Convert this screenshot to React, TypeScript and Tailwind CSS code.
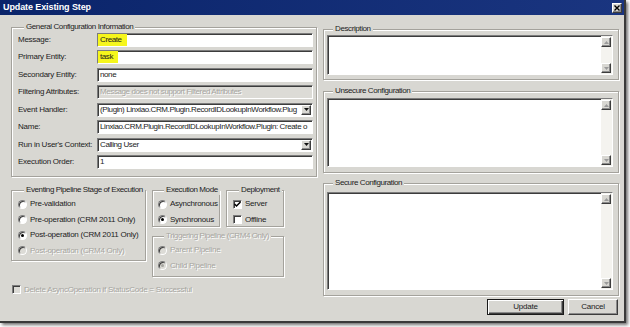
import type { ReactNode } from 'react';

const face = "bg-[#d8d7d2]";
const sunken = "border border-t-[#7c7c7c] border-l-[#7c7c7c] border-b-white border-r-white shadow-[inset_1px_1px_0_#3c3c3c]";
const raised = "border border-t-white border-l-white border-b-[#3c3c3c] border-r-[#3c3c3c] shadow-[inset_-1px_-1px_0_#8a8a8a]";
const greyText = "text-[#a6a5a0] [text-shadow:1px_1px_0_#fff]";

function Arrow({ dir, disabled = false }: { dir: 'up' | 'down'; disabled?: boolean }) {
  return (
    <svg width="5" height="3" viewBox="0 0 5 3">
      <path d={dir === 'up' ? 'M0 3 L2.5 0 L5 3 Z' : 'M0 0 L2.5 3 L5 0 Z'} fill={disabled ? '#9a9a9a' : '#111'} />
    </svg>
  );
}

function ArrowButton({ dir, muted = false }: { dir: 'up' | 'down'; muted?: boolean }) {
  return (
    <div className={`w-[10px] h-[10px] flex items-center justify-center ${face} ${raised}`}>
      <Arrow dir={dir} disabled={muted} />
    </div>
  );
}

function TextBox({ value, highlight = false, disabled = false }: { value: string; highlight?: boolean; disabled?: boolean }) {
  return (
    <div className={`h-[14px] min-w-0 flex items-stretch overflow-hidden whitespace-nowrap tracking-[-0.4px] ${sunken} ${disabled ? `bg-[#dcdbd6] ${greyText}` : 'bg-white text-[#1c1c1c]'}`}>
      {highlight ? (
        <span className="flex items-center bg-[#f6f61c] pl-[2px] pr-[5px]">{value}</span>
      ) : (
        <span className="flex items-center pl-[2px]">{value}</span>
      )}
    </div>
  );
}

function Combo({ value }: { value: string }) {
  return (
    <div className={`h-[14px] min-w-0 flex items-stretch bg-white text-[#1c1c1c] tracking-[-0.4px] ${sunken}`}>
      <span className="flex-1 min-w-0 flex items-center overflow-hidden whitespace-nowrap pl-[2px]">{value}</span>
      <div className="pr-[1px] flex items-center">
        <ArrowButton dir="down" />
      </div>
    </div>
  );
}

function Group({ title, className, disabled = false, children }: { title: string; className: string; disabled?: boolean; children?: ReactNode }) {
  return (
    <fieldset className={`min-w-0 border border-[#a4a29c] shadow-[inset_1px_1px_0_#fff,1px_1px_0_#fff] ${className}`}>
      <legend className={`ml-[6px] px-[2px] h-[10px] leading-[10px] whitespace-nowrap tracking-[-0.4px] ${face} ${disabled ? greyText : 'text-[#1c1c1c]'}`}>{title}</legend>
      {children}
    </fieldset>
  );
}

function Radio({ label, checked = false, disabled = false }: { label: string; checked?: boolean; disabled?: boolean }) {
  return (
    <div className="h-[15.5px] flex items-center gap-[3px] whitespace-nowrap">
      <span className={`shrink-0 w-[9px] h-[9px] rounded-full flex items-center justify-center ${sunken} ${disabled ? 'bg-[#dcdbd6]' : 'bg-white'}`}>
        {checked && <span className={`w-[3px] h-[3px] rounded-full ${disabled ? 'bg-[#a6a5a0]' : 'bg-black'}`} />}
      </span>
      <span className={disabled ? greyText : 'text-[#1c1c1c]'}>{label}</span>
    </div>
  );
}

function Check({ label, checked = false, disabled = false }: { label: string; checked?: boolean; disabled?: boolean }) {
  return (
    <div className="h-[15.5px] flex items-center gap-[3px] whitespace-nowrap">
      <span className={`shrink-0 w-[9px] h-[9px] flex items-center justify-center ${sunken} ${disabled ? 'bg-[#dcdbd6]' : 'bg-white'}`}>
        {checked && (
          <svg width="7" height="7" viewBox="0 0 7 7">
            <path d="M0.5 3 L2.5 5 L6.5 1" stroke="#000" strokeWidth="1.5" fill="none" />
          </svg>
        )}
      </span>
      <span className={disabled ? greyText : 'text-[#1c1c1c]'}>{label}</span>
    </div>
  );
}

function Memo({ className }: { className: string }) {
  return (
    <div className={`flex bg-white ${sunken} ${className}`}>
      <div className="flex-1" />
      <div className="w-[11px] pr-[1px] py-[1px] flex flex-col justify-between bg-[#f4f3ef]">
        <ArrowButton dir="up" muted />
        <ArrowButton dir="down" muted />
      </div>
    </div>
  );
}

const fields: { label: string; kind: 'text' | 'combo'; value: string; highlight?: boolean; disabled?: boolean }[] = [
  { label: 'Message:', kind: 'text', value: 'Create', highlight: true },
  { label: 'Primary Entity:', kind: 'text', value: 'task', highlight: true },
  { label: 'Secondary Entity:', kind: 'text', value: 'none' },
  { label: 'Filtering Attributes:', kind: 'text', value: 'Message does not support Filtered Attributes', disabled: true },
  { label: 'Event Handler:', kind: 'combo', value: '(Plugin) Linxiao.CRM.Plugin.RecordIDLookupInWorkflow.Plug' },
  { label: 'Name:', kind: 'text', value: 'Linxiao.CRM.Plugin.RecordIDLookupInWorkflow.Plugin: Create o' },
  { label: "Run in User's Context:", kind: 'combo', value: 'Calling User' },
  { label: 'Execution Order:', kind: 'text', value: '1' },
];

export default function App() {
  return (
    <div className="w-[630px] h-[327px] bg-white font-['Liberation_Sans',Arial,sans-serif] text-[8px] leading-none tracking-[-0.25px]">
      <div className={`w-[626px] h-[323px] flex flex-col ${face} border-r-2 border-b-2 border-r-[#3a3a3a] border-b-[#3a3a3a] shadow-[2px_2px_3px_rgba(0,0,0,0.55)]`}>
        {/* Title bar */}
        <div className="h-[15px] flex items-center justify-between bg-gradient-to-r from-[#0a246a] to-[#1a3580] pl-[3px] pr-[2px]">
          <span className="text-white font-bold text-[9px] tracking-[-0.1px]">Update Existing Step</span>
          <div className={`w-[10px] h-[10px] flex items-center justify-center ${face} ${raised}`}>
            <svg width="6" height="6" viewBox="0 0 6 6">
              <path d="M0.5 0.5 L5.5 5.5 M5.5 0.5 L0.5 5.5" stroke="#000" strokeWidth="1.4" />
            </svg>
          </div>
        </div>

        <div className="flex-1 flex gap-[6px] pl-[11px] pt-[7px]">
          {/* Left column */}
          <div className="w-[306px] flex flex-col">
            <Group title="General Configuration Information" className="h-[155px] pl-[6px] pr-[3px] pt-[0.5px]">
              <div className="grid grid-cols-[79px_minmax(0,1fr)] auto-rows-[14px] gap-y-[3.5px]">
                {fields.map((f) => (
                  <div key={f.label} className="contents">
                    <span className="flex items-center text-[#1c1c1c] whitespace-nowrap">{f.label}</span>
                    {f.kind === 'combo' ? (
                      <Combo value={f.value} />
                    ) : (
                      <TextBox value={f.value} highlight={f.highlight} disabled={f.disabled} />
                    )}
                  </div>
                ))}
              </div>
            </Group>

            <div className="flex gap-[6px] mt-[8px]">
              <Group title="Eventing Pipeline Stage of Execution" className="w-[135px] h-[76px] pl-[6px] pt-[1.5px]">
                <Radio label="Pre-validation" />
                <Radio label="Pre-operation (CRM 2011 Only)" />
                <Radio label="Post-operation (CRM 2011 Only)" checked />
                <Radio label="Post-operation (CRM4 Only)" disabled />
              </Group>
              <div className="w-[132px] flex flex-col">
                <div className="flex gap-[6px]">
                  <Group title="Execution Mode" className="w-[68px] h-[42px] pl-[5px] pt-[1.5px]">
                    <Radio label="Asynchronous" />
                    <Radio label="Synchronous" checked />
                  </Group>
                  <Group title="Deployment" className="w-[58px] h-[42px] pl-[6px] pt-[1.5px]">
                    <Check label="Server" checked />
                    <Check label="Offline" />
                  </Group>
                </div>
                <Group title="Triggering Pipeline (CRM4 Only)" disabled className="mt-[4px] h-[46px] pl-[5px] pt-[1.5px]">
                  <Radio label="Parent Pipeline" disabled />
                  <Radio label="Child Pipeline" checked disabled />
                </Group>
              </div>
            </div>

            <div className="mt-[5px] pl-[1px]">
              <Check label="Delete AsyncOperation if StatusCode = Successful" disabled />
            </div>
          </div>

          {/* Right column */}
          <div className="w-[296px] flex flex-col pt-[2px]">
            <Group title="Description" className="h-[56px] pl-[3px] pr-[5px] pt-[1px]">
              <Memo className="h-[40px]" />
            </Group>
            <Group title="Unsecure Configuration" className="mt-[6px] h-[87px] pl-[3px] pr-[5px] pt-[2px]">
              <Memo className="h-[69px]" />
            </Group>
            <Group title="Secure Configuration" className="mt-[5px] h-[118px] pl-[3px] pr-[5px] pt-[4px]">
              <Memo className="h-[98px]" />
            </Group>
            <div className="mt-[3px] flex justify-end gap-[4px] pr-[1px]">
              <button className="w-[77px] h-[16px] border border-[#1a1a1a] shadow-[inset_1px_1px_0_#fff,inset_-1px_-1px_0_#3c3c3c,inset_-2px_-2px_0_#8a8a8a] text-[#1c1c1c]">
                Update
              </button>
              <button className={`w-[50px] h-[16px] ${raised} text-[#1c1c1c]`}>Cancel</button>
            </div>
          </div>
        </div>
      </div>
    </div>
  );
}
